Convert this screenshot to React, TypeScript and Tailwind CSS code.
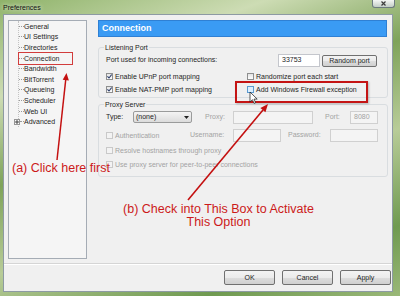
import React from "react";

type CheckProps = { checked?: boolean; disabled?: boolean; hot?: boolean };

const Check = ({ checked, disabled, hot }: CheckProps) => {
  const box = disabled
    ? "border-[#c9c9c9] bg-[#f3f3f3]"
    : hot
      ? "border-[#5b9bd1] bg-[#dcefff]"
      : "border-[#8e8f8f] bg-[linear-gradient(#e4e4e4,#ffffff)]";
  return (
    <span className={`flex h-[7px] w-[7px] shrink-0 items-center justify-center border ${box}`}>
      {checked && (
        <svg width="5" height="5" viewBox="0 0 5 5">
          <path d="M0.4 2.4 L2 4 L4.7 0.5" fill="none" stroke="#2b3d6b" strokeWidth="1.1" />
        </svg>
      )}
    </span>
  );
};

type RowProps = CheckProps & { label: string };

const CheckRow = ({ label, checked, disabled, hot }: RowProps) => (
  <div className={`flex h-[9px] items-center gap-[2px] ${disabled ? "text-[#a3a3a3]" : ""}`}>
    <Check checked={checked} disabled={disabled} hot={hot} />
    <span className="whitespace-nowrap leading-[9px]">{label}</span>
  </div>
);

const treeItems = [
  "General",
  "UI Settings",
  "Directories",
  "Connection",
  "Bandwidth",
  "BitTorrent",
  "Queueing",
  "Scheduler",
  "Web UI",
];

const Tree = () => (
  <div className="h-[239px] w-[79px] shrink-0 border border-[#a5acb5] bg-[#f5f5f5]">
    <ul className="ml-[9px] border-l border-dotted border-[#c4c4c4]">
      {treeItems.map((t) => (
        <li key={t} className="flex h-[10.6px] items-center">
          <span className="w-[5px] border-t border-dotted border-[#9a9a9a]" />
          <span className="whitespace-nowrap leading-[9px]">{t}</span>
        </li>
      ))}
      <li className="flex h-[10.6px] items-center">
        <span className="-ml-[5px] flex h-[6px] w-[6px] items-center justify-center border border-[#969696] bg-white">
          <svg width="4" height="4" viewBox="0 0 4 4">
            <path d="M0 2h4M2 0v4" stroke="#333" strokeWidth="0.9" />
          </svg>
        </span>
        <span className="w-[4px] border-t border-dotted border-[#9a9a9a]" />
        <span className="leading-[9px]">Advanced</span>
      </li>
    </ul>
  </div>
);

const Button = ({ label, width }: { label: string; width: string }) => (
  <button
    className={`${width} flex h-[15px] items-center justify-center rounded-[2px] border border-[#707070] bg-[linear-gradient(#f3f3f3_0%,#ebebeb_50%,#dddddd_51%,#d0d0d0_100%)] leading-none text-[#1e1e1e]`}
  >
    {label}
  </button>
);

const field = "h-[13px] border border-[#d0d0d0] bg-[#f4f4f4]";

export default function App() {
  return (
    <div className="relative h-[296px] w-[400px] overflow-hidden bg-[linear-gradient(160deg,#8fb36a_0%,#cddcb4_22%,#7ea35a_42%,#b8cc98_62%,#6f9a50_84%,#9ab878_100%)] font-['Liberation_Sans',Arial,sans-serif] text-[7px] text-[#1e1e1e]">
      {/* title bar */}
      <div className="flex h-[14px] items-start justify-between pl-[3px] pr-[5px]">
        <span className="mt-[3px] leading-[9px] text-[#111] [text-shadow:0_0_4px_#ffffff]">Preferences</span>
        <div className="flex h-[8px] w-[23px] items-center justify-center rounded-b-[3px] border border-t-0 border-[#6d7b7f] bg-[linear-gradient(#f4f6f4,#c3cdc6)]">
          <svg width="5" height="5" viewBox="0 0 5 5">
            <path d="M0.5 0.5 L4.5 4.5 M4.5 0.5 L0.5 4.5" stroke="#3c3c3c" strokeWidth="1.2" />
          </svg>
        </div>
      </div>

      {/* window */}
      <div className="ml-[3px] flex h-[278px] w-[390px] flex-col border border-[#8d9aa3] bg-[#f0f0f0]">
        <div className="flex items-start pl-[4px] pt-[5px]">
          <Tree />

          <div className="ml-[11px] w-[290px]">
            <div className="flex h-[17px] w-[289px] items-center border border-[#2f80d4] bg-[#3a9bf4] pl-[3px] text-[9px] font-bold text-white">
              Connection
            </div>

            <fieldset className="mt-[5.5px] rounded-[3px] border border-[#d9dde0] pb-[3px] pl-[7px] pr-[10px]">
              <legend className="-ml-[2px] px-[1px] leading-[9px]">Listening Port</legend>
              <div className="mt-[2.5px] flex h-[13px] items-center">
                <span className="flex-1 whitespace-nowrap">Port used for incoming connections:</span>
                <div className="flex h-[13px] w-[42px] items-center border border-[#c4c6cc] bg-white pl-[3px]">
                  33753
                </div>
                <Button label="Random port" width="ml-[2px] !h-[12px] w-[55px]" />
              </div>
              <div className="mt-[4.5px] grid grid-cols-[141px_1fr] gap-y-[4px]">
                <CheckRow checked label="Enable UPnP port mapping" />
                <CheckRow label="Randomize port each start" />
                <CheckRow checked label="Enable NAT-PMP port mapping" />
                <CheckRow hot label="Add Windows Firewall exception" />
              </div>
            </fieldset>

            <fieldset className="mt-[2px] rounded-[3px] border border-[#d9dde0] pb-[7px] pl-[7px] pr-[9px]">
              <legend className="-ml-[2px] px-[1px] leading-[9px]">Proxy Server</legend>
              <div className="mt-[2px] flex h-[13px] items-center">
                <span className="w-[27px]">Type:</span>
                <div className="flex h-[12px] w-[59px] items-center justify-between rounded-[2px] border border-[#9a9b9b] bg-[linear-gradient(#f4f4f4,#dcdcdc)] px-[2px]">
                  <span>(none)</span>
                  <svg width="5" height="3" viewBox="0 0 5 3">
                    <path d="M0 0h5L2.5 3z" fill="#222" />
                  </svg>
                </div>
                <span className="ml-[13px] w-[28px] text-[#a3a3a3]">Proxy:</span>
                <div className={`${field} w-[80px]`} />
                <span className="ml-[12px] w-[25px] text-[#a3a3a3]">Port:</span>
                <div className={`${field} flex w-[28px] items-center pl-[3px] text-[#a3a3a3]`}>8080</div>
              </div>
              <div className="mt-[5px] flex h-[13px] items-center">
                <div className="w-[84px]">
                  <CheckRow disabled label="Authentication" />
                </div>
                <span className="w-[43px] text-[#a3a3a3]">Username:</span>
                <div className={`${field} w-[48px]`} />
                <span className="ml-[7px] w-[42px] text-[#a3a3a3]">Password:</span>
                <div className={`${field} w-[48px]`} />
              </div>
              <div className="mt-[4.5px]">
                <CheckRow disabled label="Resolve hostnames through proxy" />
              </div>
              <div className="mt-[5px]">
                <CheckRow disabled label="Use proxy server for peer-to-peer connections" />
              </div>
            </fieldset>
          </div>
        </div>

        <div className="mt-[4px] h-[2px] border-t border-[#d5d5d5] bg-white" />

        <div className="mt-[5px] flex justify-end gap-[7px] pr-[1px]">
          <Button label="OK" width="w-[51px]" />
          <Button label="Cancel" width="w-[51px]" />
          <Button label="Apply" width="w-[51px]" />
        </div>
      </div>

      {/* annotations */}
      <div className="pointer-events-none absolute left-[18px] top-[52px] h-[13px] w-[55px] border border-[#d23c3c]" />
      <div className="pointer-events-none absolute left-[235px] top-[81px] h-[22px] w-[133px] border-2 border-[#c41414] shadow-[1px_1px_2px_rgba(0,0,0,0.25)]" />

      <div className="pointer-events-none absolute left-[12px] top-[161px] whitespace-nowrap text-[12.5px] leading-[14px] text-[#cc1a1a]">
        (a) Click here first
      </div>
      <div className="pointer-events-none absolute left-[123px] top-[203px] w-[191px] text-center text-[12.5px] leading-[13px] text-[#cc1a1a]">
        (b) Check into This Box to Activate
        <br />
        This Option
      </div>

      <svg className="pointer-events-none absolute left-0 top-0" width="400" height="296" viewBox="0 0 400 296">
        <line x1="57" y1="160" x2="65.8" y2="79" stroke="#c41010" strokeWidth="1.5" />
        <path d="M66.5 73 L68.9 80.4 L62.7 79.7 Z" fill="#c41010" />
        <line x1="188" y1="200" x2="263" y2="110" stroke="#c41010" strokeWidth="1.6" />
        <path d="M268 104 L265.4 112.2 L260.4 108.1 Z" fill="#c41010" />
        <path
          d="M250 92 L250 102 L252.4 99.7 L254.1 103.4 L255.6 102.7 L254 99.1 L257.2 99.1 Z"
          fill="#ffffff"
          stroke="#111"
          strokeWidth="0.7"
        />
      </svg>
    </div>
  );
}
